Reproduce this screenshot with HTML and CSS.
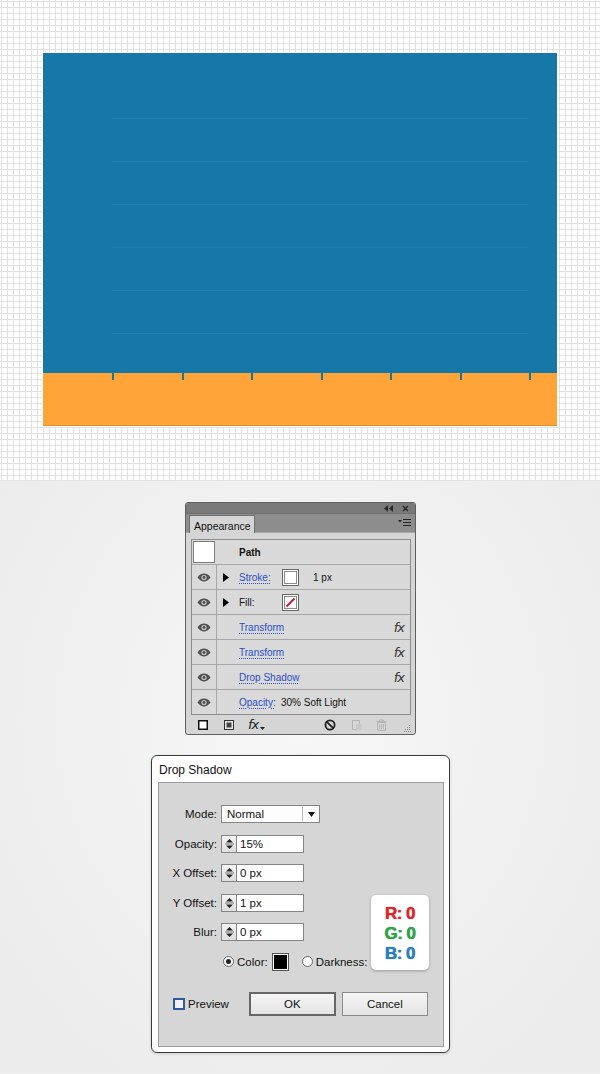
FILE: index.html
```html
<!DOCTYPE html>
<html>
<head>
<meta charset="utf-8">
<link rel="stylesheet" href="styles.css">
</head>
<body>
<div class="artboard">
  <div class="blue">
    <div class="hline"></div>
    <div class="hline"></div>
    <div class="hline"></div>
    <div class="hline"></div>
    <div class="hline"></div>
    <div class="hline"></div>
  </div>
  <div class="orange">
    <div class="ticks">
      <span></span><span></span><span></span><span></span><span></span><span></span><span></span>
    </div>
  </div>
</div>

<div class="lower">
  <div class="panel">
    <div class="panel-top">
      <svg width="9" height="7" viewBox="0 0 9 7"><path d="M4 0L0 3.5L4 7Z M9 0L5 3.5L9 7Z" fill="#2b2b2b"/></svg>
      <svg width="7" height="7" viewBox="0 0 7 7"><path d="M1 1L6 6M6 1L1 6" stroke="#2b2b2b" stroke-width="1.4"/></svg>
    </div>
    <div class="tabbar">
      <div class="tab">Appearance</div>
      <svg class="menu" width="13" height="9" viewBox="0 0 13 9"><path d="M0 2L4 2L2 4.5Z" fill="#222"/><path d="M5 1.5H13M5 4.5H13M5 7.5H13" stroke="#222" stroke-width="1.2"/></svg>
    </div>
    <div class="panel-body">
      <div class="alist">
        <div class="arow path-row">
          <span class="bigsw"></span>
          <span class="pathlbl">Path</span>
        </div>
        <div class="arow">
          <span class="eye"><svg width="14" height="9" viewBox="0 0 14 9"><path d="M0.5 4.5C2.5 1.5 4.8 0.6 7 0.6S11.5 1.5 13.5 4.5C11.5 7.5 9.2 8.4 7 8.4S2.5 7.5 0.5 4.5Z" fill="#505050"/><circle cx="7" cy="4.5" r="2.6" fill="#c4c4c4"/><circle cx="7" cy="4.5" r="1.4" fill="#505050"/></svg></span>
          <span class="tri"><svg width="6" height="9" viewBox="0 0 6 9"><path d="M0 0L6 4.5L0 9Z" fill="#000"/></svg></span>
          <span class="lnk w43">Stroke:</span>
          <span class="sw"><span class="swi"></span></span>
          <span class="val">1 px</span>
        </div>
        <div class="arow">
          <span class="eye"><svg width="14" height="9" viewBox="0 0 14 9"><path d="M0.5 4.5C2.5 1.5 4.8 0.6 7 0.6S11.5 1.5 13.5 4.5C11.5 7.5 9.2 8.4 7 8.4S2.5 7.5 0.5 4.5Z" fill="#505050"/><circle cx="7" cy="4.5" r="2.6" fill="#c4c4c4"/><circle cx="7" cy="4.5" r="1.4" fill="#505050"/></svg></span>
          <span class="tri"><svg width="6" height="9" viewBox="0 0 6 9"><path d="M0 0L6 4.5L0 9Z" fill="#000"/></svg></span>
          <span class="plain w43">Fill:</span>
          <span class="sw"><span class="swi"><svg width="13" height="13" viewBox="0 0 13 13"><path d="M2.5 10.5L10.5 2.5" stroke="#c8102e" stroke-width="1.8"/></svg></span></span>
        </div>
        <div class="arow">
          <span class="eye"><svg width="14" height="9" viewBox="0 0 14 9"><path d="M0.5 4.5C2.5 1.5 4.8 0.6 7 0.6S11.5 1.5 13.5 4.5C11.5 7.5 9.2 8.4 7 8.4S2.5 7.5 0.5 4.5Z" fill="#505050"/><circle cx="7" cy="4.5" r="2.6" fill="#c4c4c4"/><circle cx="7" cy="4.5" r="1.4" fill="#505050"/></svg></span>
          <span class="tri"></span>
          <span class="lnk">Transform</span>
          <span class="fx">fx</span>
        </div>
        <div class="arow">
          <span class="eye"><svg width="14" height="9" viewBox="0 0 14 9"><path d="M0.5 4.5C2.5 1.5 4.8 0.6 7 0.6S11.5 1.5 13.5 4.5C11.5 7.5 9.2 8.4 7 8.4S2.5 7.5 0.5 4.5Z" fill="#505050"/><circle cx="7" cy="4.5" r="2.6" fill="#c4c4c4"/><circle cx="7" cy="4.5" r="1.4" fill="#505050"/></svg></span>
          <span class="tri"></span>
          <span class="lnk">Transform</span>
          <span class="fx">fx</span>
        </div>
        <div class="arow">
          <span class="eye"><svg width="14" height="9" viewBox="0 0 14 9"><path d="M0.5 4.5C2.5 1.5 4.8 0.6 7 0.6S11.5 1.5 13.5 4.5C11.5 7.5 9.2 8.4 7 8.4S2.5 7.5 0.5 4.5Z" fill="#505050"/><circle cx="7" cy="4.5" r="2.6" fill="#c4c4c4"/><circle cx="7" cy="4.5" r="1.4" fill="#505050"/></svg></span>
          <span class="tri"></span>
          <span class="lnk">Drop Shadow</span>
          <span class="fx">fx</span>
        </div>
        <div class="arow last">
          <span class="eye"><svg width="14" height="9" viewBox="0 0 14 9"><path d="M0.5 4.5C2.5 1.5 4.8 0.6 7 0.6S11.5 1.5 13.5 4.5C11.5 7.5 9.2 8.4 7 8.4S2.5 7.5 0.5 4.5Z" fill="#505050"/><circle cx="7" cy="4.5" r="2.6" fill="#c4c4c4"/><circle cx="7" cy="4.5" r="1.4" fill="#505050"/></svg></span>
          <span class="tri"></span>
          <span class="lnk w43">Opacity:</span>
          <span class="val0">30% Soft Light</span>
        </div>
      </div>
      <div class="pbar">
        <svg class="i1" width="10" height="10" viewBox="0 0 10 10"><rect x="0.75" y="0.75" width="8.5" height="8.5" fill="#fff" stroke="#111" stroke-width="1.5"/></svg>
        <svg class="i2" width="10" height="10" viewBox="0 0 10 10"><rect x="0.5" y="0.5" width="9" height="9" fill="#e6e6e6" stroke="#333"/><rect x="2.5" y="2.5" width="5" height="5" fill="#444"/></svg>
        <span class="fxb">fx<svg width="5" height="3" viewBox="0 0 5 3"><path d="M0 0H5L2.5 3Z" fill="#222"/></svg></span>
        <span class="spacer"></span>
        <svg class="i4" width="12" height="12" viewBox="0 0 12 12"><circle cx="6" cy="6" r="4.6" fill="none" stroke="#222" stroke-width="1.8"/><path d="M2.8 2.8L9.2 9.2" stroke="#222" stroke-width="1.8"/></svg>
        <svg class="i5" width="12" height="12" viewBox="0 0 12 12"><path d="M1.5 1.5H8.5V5M1.5 1.5V10.5H5" fill="none" stroke="#b4b4b4" stroke-width="1"/><rect x="5" y="5" width="6" height="6" fill="#c9c9c9"/></svg>
        <svg class="i6" width="11" height="12" viewBox="0 0 11 12"><path d="M0.5 2.5H10.5M3.5 2.5V1H7.5V2.5M1.5 3.5H9.5V11.5H1.5Z M3.5 5V10M5.5 5V10M7.5 5V10" fill="none" stroke="#b4b4b4" stroke-width="1"/></svg>
        <svg class="grip" width="7" height="7" viewBox="0 0 7 7"><g fill="#8a8a8a"><rect x="5" y="0" width="1" height="1"/><rect x="3" y="2" width="1" height="1"/><rect x="5" y="2" width="1" height="1"/><rect x="1" y="4" width="1" height="1"/><rect x="3" y="4" width="1" height="1"/><rect x="5" y="4" width="1" height="1"/><rect x="0" y="6" width="1" height="1"/><rect x="2" y="6" width="1" height="1"/><rect x="4" y="6" width="1" height="1"/><rect x="6" y="6" width="1" height="1"/></g></svg>
      </div>
    </div>
  </div>

  <div class="dialog">
    <div class="dtitle">Drop Shadow</div>
    <div class="dbody">
      <div class="frow">
        <span class="flbl">Mode:</span>
        <span class="select"><span class="seltxt">Normal</span><span class="selarr"><svg width="7" height="5" viewBox="0 0 7 5"><path d="M0 0H7L3.5 5Z" fill="#111"/></svg></span></span>
      </div>
      <div class="frow">
        <span class="flbl">Opacity:</span>
        <span class="spin"><svg width="9" height="12" viewBox="0 0 9 12"><path d="M1 4.5L4.5 1L8 4.5Z M1 7.5L4.5 11L8 7.5Z" fill="#222"/><path d="M0 6H9" stroke="#777" stroke-width="1"/></svg></span>
        <span class="inp">15%</span>
      </div>
      <div class="frow">
        <span class="flbl">X Offset:</span>
        <span class="spin"><svg width="9" height="12" viewBox="0 0 9 12"><path d="M1 4.5L4.5 1L8 4.5Z M1 7.5L4.5 11L8 7.5Z" fill="#222"/><path d="M0 6H9" stroke="#777" stroke-width="1"/></svg></span>
        <span class="inp">0 px</span>
      </div>
      <div class="frow">
        <span class="flbl">Y Offset:</span>
        <span class="spin"><svg width="9" height="12" viewBox="0 0 9 12"><path d="M1 4.5L4.5 1L8 4.5Z M1 7.5L4.5 11L8 7.5Z" fill="#222"/><path d="M0 6H9" stroke="#777" stroke-width="1"/></svg></span>
        <span class="inp">1 px</span>
      </div>
      <div class="frow">
        <span class="flbl">Blur:</span>
        <span class="spin"><svg width="9" height="12" viewBox="0 0 9 12"><path d="M1 4.5L4.5 1L8 4.5Z M1 7.5L4.5 11L8 7.5Z" fill="#222"/><path d="M0 6H9" stroke="#777" stroke-width="1"/></svg></span>
        <span class="inp">0 px</span>
      </div>
      <div class="crow">
        <span class="radio on"><span class="dot"></span></span>
        <span class="clbl">Color:</span>
        <span class="csw"><span class="csi"></span></span>
        <span class="radio r2"></span>
        <span class="clbl">Darkness:</span>
      </div>
      <div class="brow">
        <span class="chk"></span>
        <span class="plbl">Preview</span>
        <span class="btn ok">OK</span>
        <span class="btn cancel">Cancel</span>
      </div>
      <div class="rgb">
        <div class="r">R: 0</div>
        <div class="g">G: 0</div>
        <div class="b">B: 0</div>
      </div>
    </div>
  </div>
</div>
</body>
</html>
```

FILE: styles.css
```css
html, body {
  margin: 0;
  padding: 0;
}
body {
  width: 600px;
  height: 1074px;
  overflow: hidden;
  font-family: "Liberation Sans", Arial, sans-serif;
  background: #efefef;
}

/* ---------- artboard ---------- */
.artboard {
  height: 481px;
  box-sizing: border-box;
  padding: 53px 0 0 43px;
  background-color: #ffffff;
  background-image:
    linear-gradient(to right, #e1e1e1 1px, transparent 1px),
    linear-gradient(to bottom, #e1e1e1 1px, transparent 1px);
  background-size: 6px 6px;
  background-position: 1px 1px;
  border-bottom: 1px solid #e2e2e2;
}
.blue {
  width: 514px;
  height: 322px;
  box-sizing: border-box;
  background: #1678a6;
  padding: 65px 29px 0 69px;
  box-shadow: 0 0 0 1px #ffffff;
}
.hline {
  height: 1px;
  background: #2281ae;
  margin-bottom: 42px;
}
.orange {
  width: 514px;
  height: 53px;
  box-sizing: border-box;
  background: #ffa438;
  border-bottom: 1px solid #e58c25;
  box-shadow: 1px 0 0 #ffffff, -1px 0 0 #ffffff, 0 1px 0 #ffffff;
}
.ticks {
  display: flex;
  gap: 67.5px;
  padding-left: 69px;
  margin-top: -2px;
}
.ticks span {
  width: 2px;
  height: 7px;
  background: #1a7894;
}

/* ---------- lower ---------- */
.lower {
  height: 592px;
  box-sizing: border-box;
  padding-top: 21px;
  display: flex;
  flex-direction: column;
  align-items: center;
  background: radial-gradient(ellipse 60% 70% at 50% 40%, #f7f7f7 0%, #f0f0f0 60%, #ececec 100%);
}

/* ---------- appearance panel ---------- */
.panel {
  width: 231px;
  height: 233px;
  box-sizing: border-box;
  border: 1px solid #5f5f5f;
  border-radius: 3px;
  background: #d5d5d5;
  margin-left: 1px;
  overflow: hidden;
  display: flex;
  flex-direction: column;
  font-size: 10px;
  color: #111;
}
.panel-top {
  height: 11px;
  background: #7a7a7a;
  display: flex;
  align-items: center;
  justify-content: flex-end;
  gap: 9px;
  padding-right: 6px;
}
.tabbar {
  height: 19px;
  background: #8d8d8d;
  border-top: 1px solid #6e6e6e;
  display: flex;
  align-items: flex-end;
  padding-left: 3px;
  padding-right: 4px;
  border-bottom: 1px solid #a9a9a9;
}
.tab {
  width: 66px;
  height: 18px;
  box-sizing: border-box;
  background: #d5d5d5;
  border: 1px solid #6e6e6e;
  border-bottom: none;
  padding: 4px 0 0 4px;
  font-size: 10.5px;
  color: #111;
  margin-bottom: -1px;
}
.menu {
  margin-left: auto;
  margin-bottom: 5px;
}
.panel-body {
  flex: 1;
  display: flex;
  flex-direction: column;
  padding: 6px 4px 0 5px;
}
.alist {
  border: 1px solid #8c8c8c;
  background: #d9d9d9;
}
.arow {
  height: 24px;
  border-bottom: 1px solid #a7a7a7;
  display: flex;
  align-items: center;
}
.arow.last {
  border-bottom: none;
}
.bigsw {
  width: 20px;
  height: 20px;
  margin-left: 1px;
  background: #fff;
  border: 1px solid #7d7d7d;
}
.pathlbl {
  font-weight: bold;
  margin-left: 24px;
}
.eye {
  width: 24px;
  height: 24px;
  border-right: 1px solid #a7a7a7;
  display: flex;
  align-items: center;
  justify-content: center;
}
.tri {
  width: 22px;
  display: flex;
  align-items: center;
  padding-left: 6px;
  box-sizing: border-box;
}
.lnk {
  color: #2a4ec2;
  text-decoration: underline dotted #2a4ec2;
  text-underline-offset: 2px;
}
.w43 {
  width: 43px;
}
.plain {
  color: #111;
}
.sw {
  width: 17px;
  height: 17px;
  box-sizing: border-box;
  border: 1px solid #666;
  background: #fff;
  padding: 1px;
}
.swi {
  display: block;
  width: 13px;
  height: 13px;
  box-sizing: border-box;
  border: 1px solid #8a8a8a;
  background: #fff;
}
.swi svg {
  display: block;
  margin: -1px;
}
.val {
  margin-left: 14px;
}
.val0 {
  margin-left: -1px;
}
.fx {
  margin-left: auto;
  margin-right: 6px;
  font-style: italic;
  font-size: 13px;
  font-family: "DejaVu Sans", sans-serif;
  color: #333;
  letter-spacing: -1px;
}
.pbar {
  height: 19px;
  display: flex;
  align-items: center;
  padding-left: 7px;
}
.i2 {
  margin-left: 16px;
}
.fxb {
  margin-left: 14px;
  font-style: italic;
  font-size: 13px;
  font-family: "DejaVu Sans", sans-serif;
  color: #222;
  letter-spacing: -1px;
  display: flex;
  align-items: flex-end;
}
.fxb svg {
  margin-left: 2px;
  margin-bottom: 2px;
}
.spacer {
  flex: 1;
}
.i5 {
  margin-left: 15px;
}
.i6 {
  margin-left: 13px;
}
.grip {
  margin-left: 17px;
  margin-top: 8px;
}

/* ---------- drop shadow dialog ---------- */
.dialog {
  margin-top: 20px;
  width: 299px;
  height: 298px;
  box-sizing: border-box;
  border: 1px solid #3a3a3a;
  border-radius: 6px;
  background: #ffffff;
  box-shadow: 0 1px 3px rgba(0,0,0,0.15);
  display: flex;
  flex-direction: column;
  padding: 0 5px 5px 6px;
  margin-left: 1px;
}
.dtitle {
  height: 26px;
  font-size: 12px;
  color: #111;
  padding: 7px 0 0 1px;
  box-sizing: border-box;
}
.dbody {
  flex: 1;
  position: relative;
  background: #d6d6d6;
  border: 1px solid #9c9c9c;
  font-size: 11.5px;
  color: #111;
  padding-top: 22px;
}
.frow {
  display: flex;
  align-items: center;
  height: 18px;
  margin-bottom: 11.5px;
}
.flbl {
  width: 58px;
  text-align: right;
  margin-right: 4px;
}
.select {
  width: 99px;
  height: 18px;
  box-sizing: border-box;
  border: 1px solid #858585;
  background: #fdfdfd;
  display: flex;
  align-items: center;
}
.seltxt {
  flex: 1;
  padding-left: 5px;
}
.selarr {
  width: 16px;
  height: 14px;
  border-left: 1px solid #b5b5b5;
  display: flex;
  align-items: center;
  justify-content: center;
}
.spin {
  width: 16px;
  height: 18px;
  box-sizing: border-box;
  border: 1px solid #858585;
  background: linear-gradient(#f4f4f4, #dedede);
  display: flex;
  align-items: center;
  justify-content: center;
}
.inp {
  width: 67px;
  height: 18px;
  box-sizing: border-box;
  border: 1px solid #858585;
  border-left: none;
  background: #fff;
  padding-left: 3px;
  display: flex;
  align-items: center;
}
.crow {
  display: flex;
  align-items: center;
  height: 18px;
  margin-top: 3px;
  padding-left: 64px;
}
.radio {
  width: 11px;
  height: 11px;
  box-sizing: border-box;
  border: 1px solid #666;
  border-radius: 50%;
  background: #fafafa;
  display: flex;
  align-items: center;
  justify-content: center;
}
.radio .dot {
  width: 5px;
  height: 5px;
  border-radius: 50%;
  background: #222;
}
.radio.r2 {
  margin-left: 13px;
}
.clbl {
  margin-left: 3px;
}
.csw {
  margin-left: 4px;
  width: 17px;
  height: 18px;
  box-sizing: border-box;
  border: 1px solid #555;
  background: #fff;
  padding: 1px;
}
.csi {
  display: block;
  width: 100%;
  height: 100%;
  background: #000;
}
.brow {
  display: flex;
  align-items: center;
  margin-top: 21px;
  padding-left: 14px;
}
.chk {
  width: 12px;
  height: 12px;
  box-sizing: border-box;
  border: 2px solid #2d5a9c;
  background: #f2f2f2;
}
.plbl {
  margin-left: 3px;
}
.btn {
  height: 24px;
  box-sizing: border-box;
  border: 1px solid #8a8a8a;
  background: linear-gradient(#f6f6f6, #e4e4e4);
  display: flex;
  align-items: center;
  justify-content: center;
}
.btn.ok {
  width: 87px;
  margin-left: 20px;
  border: 2px solid #666;
}
.btn.cancel {
  width: 86px;
  margin-left: 6px;
}
.rgb {
  position: absolute;
  left: 212px;
  top: 112px;
  width: 58px;
  height: 75px;
  box-sizing: border-box;
  background: #ffffff;
  border-radius: 5px;
  box-shadow: 0 1px 3px rgba(0,0,0,0.3);
  padding-top: 9px;
  display: flex;
  flex-direction: column;
  align-items: center;
  font-weight: bold;
  font-size: 17px;
  line-height: 20px;
  letter-spacing: -0.5px;
}
.rgb .r { color: #e1262e; text-shadow: 0 0 1px #9e1a20; }
.rgb .g { color: #2da647; text-shadow: 0 0 1px #1d6e2f; }
.rgb .b { color: #2b7fc0; text-shadow: 0 0 1px #1b5482; }
```
